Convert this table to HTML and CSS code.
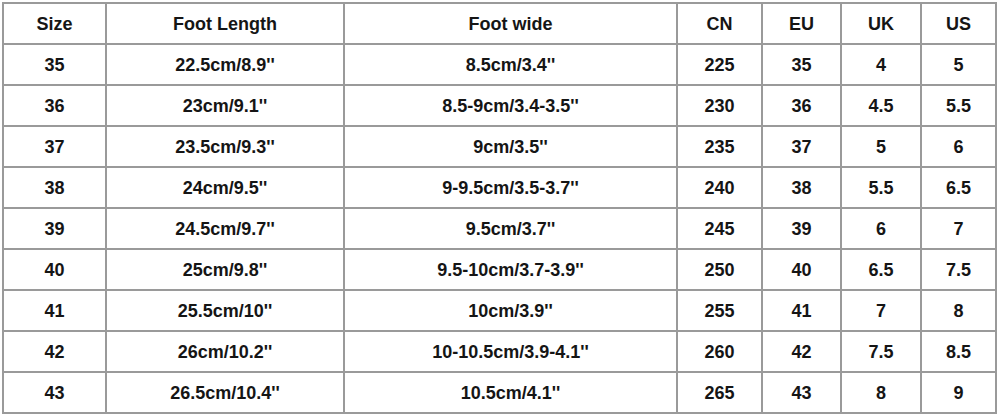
FILE: index.html
```html
<!DOCTYPE html>
<html>
<head>
<meta charset="utf-8">
<link rel="stylesheet" href="styles.css">
</head>
<body>
<table class="size-table">
  <colgroup>
    <col class="c-size">
    <col class="c-length">
    <col class="c-wide">
    <col class="c-cn">
    <col class="c-eu">
    <col class="c-uk">
    <col class="c-us">
  </colgroup>
  <thead>
    <tr><th>Size</th><th>Foot Length</th><th>Foot wide</th><th>CN</th><th>EU</th><th>UK</th><th>US</th></tr>
  </thead>
  <tbody>
    <tr><td>35</td><td>22.5cm/8.9''</td><td>8.5cm/3.4''</td><td>225</td><td>35</td><td>4</td><td>5</td></tr>
    <tr><td>36</td><td>23cm/9.1''</td><td>8.5-9cm/3.4-3.5''</td><td>230</td><td>36</td><td>4.5</td><td>5.5</td></tr>
    <tr><td>37</td><td>23.5cm/9.3''</td><td>9cm/3.5''</td><td>235</td><td>37</td><td>5</td><td>6</td></tr>
    <tr><td>38</td><td>24cm/9.5''</td><td>9-9.5cm/3.5-3.7''</td><td>240</td><td>38</td><td>5.5</td><td>6.5</td></tr>
    <tr><td>39</td><td>24.5cm/9.7''</td><td>9.5cm/3.7''</td><td>245</td><td>39</td><td>6</td><td>7</td></tr>
    <tr><td>40</td><td>25cm/9.8''</td><td>9.5-10cm/3.7-3.9''</td><td>250</td><td>40</td><td>6.5</td><td>7.5</td></tr>
    <tr><td>41</td><td>25.5cm/10''</td><td>10cm/3.9''</td><td>255</td><td>41</td><td>7</td><td>8</td></tr>
    <tr><td>42</td><td>26cm/10.2''</td><td>10-10.5cm/3.9-4.1''</td><td>260</td><td>42</td><td>7.5</td><td>8.5</td></tr>
    <tr><td>43</td><td>26.5cm/10.4''</td><td>10.5cm/4.1''</td><td>265</td><td>43</td><td>8</td><td>9</td></tr>
  </tbody>
</table>
</body>
</html>
```

FILE: styles.css
```css
html, body {
  margin: 0;
  padding: 0;
  background: #ffffff;
}
body {
  padding: 2px 0 0 2px;
  font-family: "Liberation Sans", Arial, sans-serif;
}
.size-table {
  border-collapse: collapse;
  table-layout: fixed;
  width: 995px;
  color: #151515;
  font-size: 18px;
  font-weight: bold;
}
.c-size { width: 103px; }
.c-length { width: 238px; }
.c-wide { width: 333px; }
.c-cn { width: 85px; }
.c-eu { width: 79px; }
.c-uk { width: 80px; }
.c-us { width: 75px; }
.size-table tr {
  height: 41px;
}
.size-table th,
.size-table td {
  border: 2px solid #9a9a9a;
  padding: 0;
  text-align: center;
  vertical-align: middle;
  font-weight: bold;
  line-height: 20px;
}
```
